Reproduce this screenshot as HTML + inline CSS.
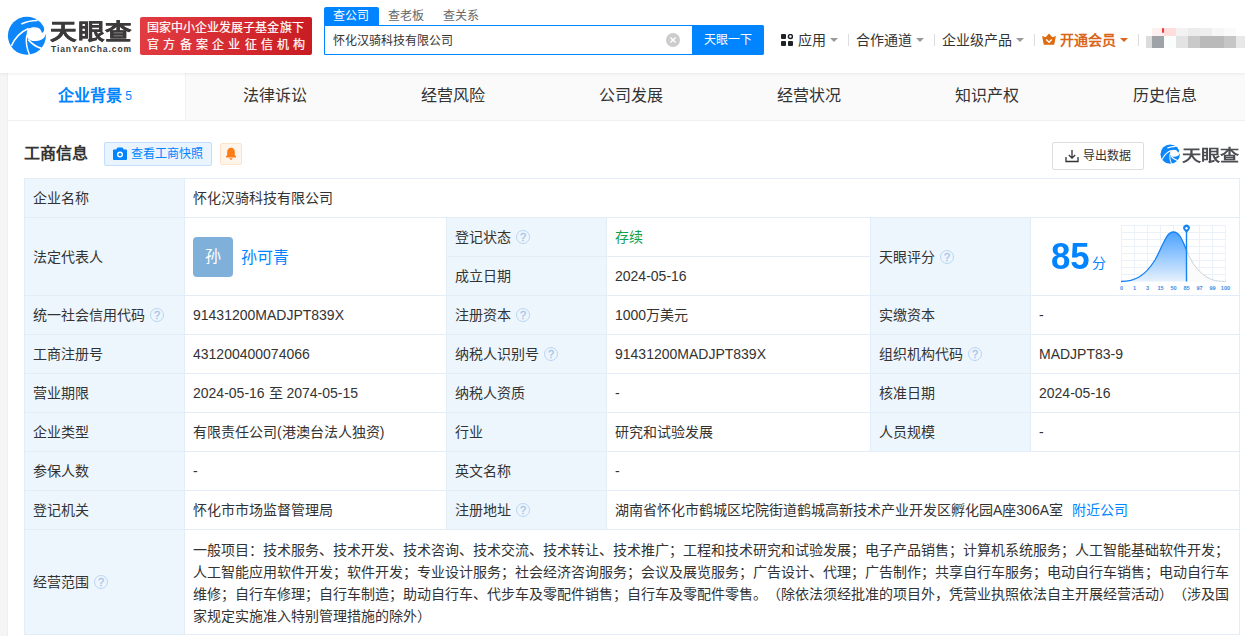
<!DOCTYPE html>
<html lang="zh-CN">
<head>
<meta charset="utf-8">
<style>
*{margin:0;padding:0;box-sizing:border-box}
html,body{width:1245px;height:636px;overflow:hidden;background:#f5f5f5}
body{font-family:"Liberation Sans",sans-serif;color:#333;font-size:14px;position:relative;text-spacing-trim:space-all}
.a{position:absolute;white-space:nowrap}
#hdr{position:absolute;left:0;top:0;width:1245px;height:73px;background:#fff;box-shadow:0 1px 3px rgba(0,0,0,.07);z-index:5}
#card{position:absolute;left:8px;top:73px;width:1245px;height:570px;background:#fff}
.tab{position:absolute;top:0;height:47px;width:178px;background:#fafafa;text-align:center;font-size:16px;line-height:46px;color:#333}
.hl{position:absolute;height:1px;background:#e2edf7}
.vl{position:absolute;width:1px;background:#e2edf7}
.lab{position:absolute;background:#eef6fd}
.t{position:absolute;white-space:nowrap;font-size:14px;line-height:20px;color:#333;margin-top:1px}
.q{display:inline-block;width:14px;height:14px;border:1px solid #b9d5f1;border-radius:50%;color:#a3c5ea;font-size:11px;line-height:12px;text-align:center;vertical-align:top;margin-left:5px;font-family:"Liberation Sans",sans-serif;-webkit-text-stroke:0.3px #a3c5ea}
</style>
</head>
<body>
<div id="hdr">
  <!-- logo -->
  <svg class="a" style="left:5px;top:14px" width="45" height="45" viewBox="0 0 45 45">
    <circle cx="21.9" cy="21.8" r="19" fill="#0c86fb"/>
    <path d="M23 14.8C26 13 31 12.6 34 14.2C35.5 15.2 36.4 16.8 36.7 18.6C37.6 18.9 38.6 18.2 38.9 16.8L39.3 14L42 14L42 20.2L40.7 20.2C40 23.5 37.5 26.5 31 27.1C27 27.3 24 26 22.5 24C21.3 22 21.3 18 23 14.8Z" fill="#fff"/>
    <path d="M16.4 10C21 7.8 27 6.4 32.6 6.5" stroke="#fff" stroke-width="1.7" fill="none"/>
    <path d="M6.3 32C10 24 15.5 18 23.5 14.6" stroke="#fff" stroke-width="1.6" fill="none"/>
    <path d="M24.6 41C21.5 34 20.5 28 21.8 21.2" stroke="#fff" stroke-width="1.5" fill="none"/>
    <path d="M23.3 25.5C26 29 29.5 32.3 36.5 34.4" stroke="#fff" stroke-width="1.8" fill="none"/>
  </svg>
  <div class="a" style="left:50px;top:19px;font-size:26px;line-height:30px;font-weight:bold;color:#3c3a3b;letter-spacing:1px;-webkit-text-stroke:0.5px #3c3a3b;transform:scale(1.02,0.84);transform-origin:0 0">天眼查</div>
  <div class="a" style="left:51px;top:44px;font-size:8.5px;line-height:10px;font-weight:bold;color:#3c3a3b;letter-spacing:0.9px">TianYanCha.com</div>
  <!-- red badge -->
  <div class="a" style="left:140px;top:17px;width:172px;height:38px;border-radius:2px;background:linear-gradient(100deg,#e23c42,#c81c22)"></div>
  <div class="a" style="left:147px;top:20px;font-size:12px;line-height:16px;color:#fff;letter-spacing:0.05px;-webkit-text-stroke:0.2px #fff">国家中小企业发展子基金旗下</div>
  <div class="a" style="left:147px;top:37px;font-size:12px;line-height:16px;color:#fff;letter-spacing:4.25px;-webkit-text-stroke:0.2px #fff">官方备案企业征信机构</div>
  <!-- search -->
  <div class="a" style="left:324px;top:7px;width:55px;height:19px;background:#0084ff;border-radius:2px 2px 0 0"></div>
  <div class="a" style="left:333px;top:8px;font-size:12px;line-height:16px;color:#fff">查公司</div>
  <div class="a" style="left:388px;top:8px;font-size:12px;line-height:16px;color:#666">查老板</div>
  <div class="a" style="left:443px;top:8px;font-size:12px;line-height:16px;color:#666">查关系</div>
  <div class="a" style="left:324px;top:25px;width:440px;height:30px;border:1px solid #0084ff;border-radius:0 2px 2px 0;background:#fff"></div>
  <div class="a" style="left:333px;top:33px;font-size:12px;line-height:16px;color:#333">怀化汉骑科技有限公司</div>
  <div class="a" style="left:666px;top:33px;width:14px;height:14px;border-radius:50%;background:#ccc"></div>
  <svg class="a" style="left:666px;top:33px" width="14" height="14" viewBox="0 0 14 14"><path d="M4.4 4.4L9.6 9.6M9.6 4.4L4.4 9.6" stroke="#fff" stroke-width="1.4"/></svg>
  <div class="a" style="left:692px;top:25px;width:72px;height:30px;background:#0084ff;border-radius:0 2px 2px 0"></div>
  <div class="a" style="left:704px;top:32px;font-size:12px;line-height:16px;color:#fff">天眼一下</div>
  <!-- nav -->
  <svg class="a" style="left:781px;top:34px" width="12" height="12" viewBox="0 0 12 12">
    <rect x="0" y="0" width="5" height="5" rx="1" fill="#1f2329"/>
    <circle cx="9.4" cy="2.6" r="2" stroke="#1f2329" stroke-width="1.5" fill="none"/>
    <rect x="0" y="7" width="5" height="5" rx="1" fill="#1f2329"/>
    <rect x="7" y="7" width="5" height="5" rx="1" fill="#1f2329"/>
  </svg>
  <div class="a" style="left:798px;top:30px;font-size:14px;line-height:20px;color:#333">应用</div>
  <div class="a" style="left:830px;top:38px;width:0;height:0;border-left:4px solid transparent;border-right:4px solid transparent;border-top:4px solid #999"></div>
  <div class="a" style="left:848px;top:34px;width:1px;height:12px;background:#ddd"></div>
  <div class="a" style="left:856px;top:30px;font-size:14px;line-height:20px;color:#333">合作通道</div>
  <div class="a" style="left:916px;top:38px;width:0;height:0;border-left:4px solid transparent;border-right:4px solid transparent;border-top:4px solid #999"></div>
  <div class="a" style="left:934px;top:34px;width:1px;height:12px;background:#ddd"></div>
  <div class="a" style="left:942px;top:30px;font-size:14px;line-height:20px;color:#333">企业级产品</div>
  <div class="a" style="left:1016px;top:38px;width:0;height:0;border-left:4px solid transparent;border-right:4px solid transparent;border-top:4px solid #999"></div>
  <div class="a" style="left:1034px;top:34px;width:1px;height:12px;background:#ddd"></div>
  <svg class="a" style="left:1041px;top:33px" width="16" height="13" viewBox="0 0 16 13">
    <path d="M1.1 3L4.7 4.3L8 0.5L11.3 4.3L14.9 3L13.2 11.8H2.8Z" fill="#dc6a0e"/>
    <path d="M5.2 6.4L8 9.3L10.8 6.4" stroke="#fff" stroke-width="1.4" fill="none"/>
  </svg>
  <div class="a" style="left:1060px;top:30px;font-size:14px;line-height:20px;color:#d9661a;font-weight:bold">开通会员</div>
  <div class="a" style="left:1120px;top:38px;width:0;height:0;border-left:4px solid transparent;border-right:4px solid transparent;border-top:4px solid #d9661a"></div>
  <div class="a" style="left:1138px;top:34px;width:1px;height:12px;background:#ddd"></div>
  <!-- mosaic -->
  <div class="a" style="left:1146px;top:27px;width:99px;height:22px;filter:blur(0.7px)">
  <div class="a" style="left:6px;top:1px;width:12px;height:8px;background:#fcf0f0"></div>
  <div class="a" style="left:18px;top:1px;width:12px;height:8px;background:#ffdddd"></div>
  <div class="a" style="left:30px;top:1px;width:12px;height:8px;background:#f2f2f2"></div>
  <div class="a" style="left:42px;top:1px;width:12px;height:8px;background:#ececec"></div>
  <div class="a" style="left:54px;top:1px;width:12px;height:8px;background:#eeeeee"></div>
  <div class="a" style="left:66px;top:1px;width:12px;height:8px;background:#f6f6f6"></div>
  <div class="a" style="left:78px;top:1px;width:12px;height:8px;background:#fafafa"></div>
  <div class="a" style="left:0px;top:9px;width:6px;height:12px;background:#dcdcdc"></div>
  <div class="a" style="left:6px;top:9px;width:12px;height:12px;background:#9ea3a8"></div>
  <div class="a" style="left:18px;top:9px;width:12px;height:12px;background:#fbfcfc"></div>
  <div class="a" style="left:30px;top:9px;width:12px;height:12px;background:#e3e3e3"></div>
  <div class="a" style="left:42px;top:9px;width:12px;height:12px;background:#c9c9c9"></div>
  <div class="a" style="left:54px;top:9px;width:12px;height:12px;background:#bababa"></div>
  <div class="a" style="left:66px;top:9px;width:12px;height:12px;background:#bababa"></div>
  <div class="a" style="left:78px;top:9px;width:12px;height:12px;background:#c6c6c6"></div>
  <div class="a" style="left:90px;top:9px;width:9px;height:12px;background:#e8e8e8"></div>
  <div class="a" style="left:16px;top:1px;width:2px;height:5px;background:#f33;border-radius:2px"></div>
  </div>
</div>

<div id="card">
  <div class="a" style="left:-1px;top:0;width:1px;height:570px;background:#eeeeee"></div>
  <div class="a" style="left:0;top:47px;width:1245px;height:1px;background:#f0f0f0"></div>
  <div class="tab" style="left:0;width:177px;background:#fff;color:#0084ff;font-weight:bold;padding-right:3px">企业背景<span style="font-size:12px;font-weight:normal;margin-left:3px;position:relative;top:-1px">5</span></div>
  <div class="a" style="left:177px;top:0;width:1px;height:47px;background:#f0f0f0"></div>
  <div class="tab" style="left:178px">法律诉讼</div>
  <div class="tab" style="left:356px">经营风险</div>
  <div class="tab" style="left:534px">公司发展</div>
  <div class="tab" style="left:712px">经营状况</div>
  <div class="tab" style="left:890px">知识产权</div>
  <div class="tab" style="left:1068px">历史信息</div>
</div>
<div id="body">
<div class="lab" style="left:24px;top:178px;width:160px;height:39px"></div>
<div class="lab" style="left:24px;top:217px;width:160px;height:78px"></div>
<div class="lab" style="left:24px;top:295px;width:160px;height:39px"></div>
<div class="lab" style="left:24px;top:334px;width:160px;height:39px"></div>
<div class="lab" style="left:24px;top:373px;width:160px;height:39px"></div>
<div class="lab" style="left:24px;top:412px;width:160px;height:39px"></div>
<div class="lab" style="left:24px;top:451px;width:160px;height:39px"></div>
<div class="lab" style="left:24px;top:490px;width:160px;height:39px"></div>
<div class="lab" style="left:24px;top:529px;width:160px;height:105px"></div>
<div class="lab" style="left:446px;top:217px;width:160px;height:39px"></div>
<div class="lab" style="left:446px;top:256px;width:160px;height:39px"></div>
<div class="lab" style="left:446px;top:295px;width:160px;height:39px"></div>
<div class="lab" style="left:446px;top:334px;width:160px;height:39px"></div>
<div class="lab" style="left:446px;top:373px;width:160px;height:39px"></div>
<div class="lab" style="left:446px;top:412px;width:160px;height:39px"></div>
<div class="lab" style="left:446px;top:451px;width:160px;height:39px"></div>
<div class="lab" style="left:446px;top:490px;width:160px;height:39px"></div>
<div class="lab" style="left:870px;top:217px;width:160px;height:78px"></div>
<div class="lab" style="left:870px;top:295px;width:160px;height:39px"></div>
<div class="lab" style="left:870px;top:334px;width:160px;height:39px"></div>
<div class="lab" style="left:870px;top:373px;width:160px;height:39px"></div>
<div class="lab" style="left:870px;top:412px;width:160px;height:39px"></div>
<div class="hl" style="left:24px;top:178px;width:1216px"></div>
<div class="hl" style="left:24px;top:217px;width:1216px"></div>
<div class="hl" style="left:24px;top:295px;width:1216px"></div>
<div class="hl" style="left:24px;top:334px;width:1216px"></div>
<div class="hl" style="left:24px;top:373px;width:1216px"></div>
<div class="hl" style="left:24px;top:412px;width:1216px"></div>
<div class="hl" style="left:24px;top:451px;width:1216px"></div>
<div class="hl" style="left:24px;top:490px;width:1216px"></div>
<div class="hl" style="left:24px;top:529px;width:1216px"></div>
<div class="hl" style="left:24px;top:634px;width:1216px"></div>
<div class="hl" style="left:446px;top:256px;width:425px"></div>
<div class="vl" style="left:24px;top:178px;height:457px"></div>
<div class="vl" style="left:184px;top:178px;height:457px"></div>
<div class="vl" style="left:1239px;top:178px;height:457px"></div>
<div class="vl" style="left:446px;top:217px;height:313px"></div>
<div class="vl" style="left:606px;top:217px;height:313px"></div>
<div class="vl" style="left:870px;top:217px;height:235px"></div>
<div class="vl" style="left:1030px;top:217px;height:235px"></div>
<div class="t" style="left:33px;top:178px;height:39px;line-height:39px;">企业名称</div>
<div class="t" style="left:193px;top:178px;height:39px;line-height:39px;">怀化汉骑科技有限公司</div>
<div class="t" style="left:33px;top:217px;height:78px;line-height:78px;">法定代表人</div>
<div class="t" style="left:455px;top:217px;height:39px;line-height:39px;">登记状态<span class="q" style="margin-top:12px">?</span></div>
<div class="t" style="left:615px;top:217px;height:39px;line-height:39px;color:#12a04a">存续</div>
<div class="t" style="left:455px;top:256px;height:39px;line-height:39px;">成立日期</div>
<div class="t" style="left:615px;top:256px;height:39px;line-height:39px;">2024-05-16</div>
<div class="t" style="left:879px;top:217px;height:78px;line-height:78px;">天眼评分<span class="q" style="margin-top:32px">?</span></div>
<div class="t" style="left:33px;top:295px;height:39px;line-height:39px;">统一社会信用代码<span class="q" style="margin-top:12px">?</span></div>
<div class="t" style="left:193px;top:295px;height:39px;line-height:39px;">91431200MADJPT839X</div>
<div class="t" style="left:455px;top:295px;height:39px;line-height:39px;">注册资本<span class="q" style="margin-top:12px">?</span></div>
<div class="t" style="left:615px;top:295px;height:39px;line-height:39px;">1000万美元</div>
<div class="t" style="left:879px;top:295px;height:39px;line-height:39px;">实缴资本</div>
<div class="t" style="left:1039px;top:295px;height:39px;line-height:39px;">-</div>
<div class="t" style="left:33px;top:334px;height:39px;line-height:39px;">工商注册号</div>
<div class="t" style="left:193px;top:334px;height:39px;line-height:39px;">431200400074066</div>
<div class="t" style="left:455px;top:334px;height:39px;line-height:39px;">纳税人识别号<span class="q" style="margin-top:12px">?</span></div>
<div class="t" style="left:615px;top:334px;height:39px;line-height:39px;">91431200MADJPT839X</div>
<div class="t" style="left:879px;top:334px;height:39px;line-height:39px;">组织机构代码<span class="q" style="margin-top:12px">?</span></div>
<div class="t" style="left:1039px;top:334px;height:39px;line-height:39px;">MADJPT83-9</div>
<div class="t" style="left:33px;top:373px;height:39px;line-height:39px;">营业期限</div>
<div class="t" style="left:193px;top:373px;height:39px;line-height:39px;">2024-05-16 至 2074-05-15</div>
<div class="t" style="left:455px;top:373px;height:39px;line-height:39px;">纳税人资质</div>
<div class="t" style="left:615px;top:373px;height:39px;line-height:39px;">-</div>
<div class="t" style="left:879px;top:373px;height:39px;line-height:39px;">核准日期</div>
<div class="t" style="left:1039px;top:373px;height:39px;line-height:39px;">2024-05-16</div>
<div class="t" style="left:33px;top:412px;height:39px;line-height:39px;">企业类型</div>
<div class="t" style="left:193px;top:412px;height:39px;line-height:39px;">有限责任公司(港澳台法人独资)</div>
<div class="t" style="left:455px;top:412px;height:39px;line-height:39px;">行业</div>
<div class="t" style="left:615px;top:412px;height:39px;line-height:39px;">研究和试验发展</div>
<div class="t" style="left:879px;top:412px;height:39px;line-height:39px;">人员规模</div>
<div class="t" style="left:1039px;top:412px;height:39px;line-height:39px;">-</div>
<div class="t" style="left:33px;top:451px;height:39px;line-height:39px;">参保人数</div>
<div class="t" style="left:193px;top:451px;height:39px;line-height:39px;">-</div>
<div class="t" style="left:455px;top:451px;height:39px;line-height:39px;">英文名称</div>
<div class="t" style="left:615px;top:451px;height:39px;line-height:39px;">-</div>
<div class="t" style="left:33px;top:490px;height:39px;line-height:39px;">登记机关</div>
<div class="t" style="left:193px;top:490px;height:39px;line-height:39px;">怀化市市场监督管理局</div>
<div class="t" style="left:455px;top:490px;height:39px;line-height:39px;">注册地址<span class="q" style="margin-top:12px">?</span></div>
<div class="t" style="left:615px;top:490px;height:39px;line-height:39px;">湖南省怀化市鹤城区坨院街道鹤城高新技术产业开发区孵化园A座306A室<span style="color:#0084ff;margin-left:9px">附近公司</span></div>
<div class="t" style="left:33px;top:529px;height:105px;line-height:105px;">经营范围<span class="q" style="margin-top:45px">?</span></div>
<div class="t" style="left:193px;top:538px;line-height:22px">一般项目：技术服务、技术开发、技术咨询、技术交流、技术转让、技术推广；工程和技术研究和试验发展；电子产品销售；计算机系统服务；人工智能基础软件开发；<br>人工智能应用软件开发；软件开发；专业设计服务；社会经济咨询服务；会议及展览服务；广告设计、代理；广告制作；共享自行车服务；电动自行车销售；电动自行车<br>维修；自行车修理；自行车制造；助动自行车、代步车及零配件销售；自行车及零配件零售。（除依法须经批准的项目外，凭营业执照依法自主开展经营活动）（涉及国<br>家规定实施准入特别管理措施的除外）</div>
</div>
<!-- section header -->
<div class="a" style="left:24px;top:143px;font-size:16px;line-height:22px;font-weight:bold;color:#333">工商信息</div>
<div class="a" style="left:104px;top:142px;width:108px;height:24px;background:#eaf4fe;border:1px solid #c3dffb;border-radius:2px"></div>
<svg class="a" style="left:113px;top:147px" width="14" height="13" viewBox="0 0 14 13">
  <path d="M4.5 0.5H9.5L10.8 2.5H13A1 1 0 0 1 14 3.5V12A1 1 0 0 1 13 13H1A1 1 0 0 1 0 12V3.5A1 1 0 0 1 1 2.5H3.2Z" fill="#0084ff"/>
  <circle cx="7" cy="7.5" r="3" fill="#fff"/><circle cx="7" cy="7.5" r="1.6" fill="#0084ff"/>
</svg>
<div class="a" style="left:131px;top:146px;font-size:12px;line-height:16px;color:#0084ff">查看工商快照</div>
<div class="a" style="left:220px;top:143px;width:22px;height:22px;background:#fff4ea;border:1px solid #ffe2c8;border-radius:2px"></div>
<svg class="a" style="left:225px;top:147px" width="12" height="13" viewBox="0 0 12 13">
  <path d="M6 0.8C3.6 0.8 2.2 2.6 2.2 5V8L1 9.6V10.4H11V9.6L9.8 8V5C9.8 2.6 8.4 0.8 6 0.8Z" fill="#ff7b15"/>
  <path d="M4.5 11.2A1.5 1.5 0 0 0 7.5 11.2Z" fill="#ff7b15"/>
</svg>
<!-- export -->
<div class="a" style="left:1052px;top:142px;width:92px;height:28px;background:#fff;border:1px solid #ddd;border-radius:2px"></div>
<svg class="a" style="left:1065px;top:149px" width="14" height="14" viewBox="0 0 14 14">
  <path d="M7 1V9M3.8 6L7 9.2L10.2 6" stroke="#333" stroke-width="1.3" fill="none"/>
  <path d="M1 8V12.5H13V8" stroke="#333" stroke-width="1.3" fill="none"/>
</svg>
<div class="a" style="left:1083px;top:148px;font-size:12px;line-height:16px;color:#333">导出数据</div>
<!-- small logo -->
<svg class="a" style="left:1159px;top:143px" width="23" height="23" viewBox="0 0 45 45">
    <circle cx="21.9" cy="21.8" r="19" fill="#0c86fb"/>
    <path d="M23 14.8C26 13 31 12.6 34 14.2C35.5 15.2 36.4 16.8 36.7 18.6C37.6 18.9 38.6 18.2 38.9 16.8L39.3 14L42 14L42 20.2L40.7 20.2C40 23.5 37.5 26.5 31 27.1C27 27.3 24 26 22.5 24C21.3 22 21.3 18 23 14.8Z" fill="#fff"/>
    <path d="M16.4 10C21 7.8 27 6.4 32.6 6.5" stroke="#fff" stroke-width="2.21" fill="none"/>
    <path d="M6.3 32C10 24 15.5 18 23.5 14.6" stroke="#fff" stroke-width="2.08" fill="none"/>
    <path d="M24.6 41C21.5 34 20.5 28 21.8 21.2" stroke="#fff" stroke-width="1.95" fill="none"/>
    <path d="M23.3 25.5C26 29 29.5 32.3 36.5 34.4" stroke="#fff" stroke-width="2.34" fill="none"/>
  </svg>
<div class="a" style="left:1182px;top:146px;font-size:19px;line-height:24px;font-weight:bold;color:#4b4d52;transform:scale(1.01,0.84);transform-origin:0 0">天眼查</div>
<!-- legal rep -->
<div class="a" style="left:193px;top:237px;width:40px;height:40px;border-radius:4px;background:#7fb0d9;color:#fff;font-size:16px;line-height:40px;text-align:center">孙</div>
<div class="a" style="left:241px;top:247px;font-size:16px;line-height:22px;color:#0084ff">孙可青</div>
<!-- score -->
<div class="a" style="left:1051px;top:234px;font-size:37px;line-height:46px;font-weight:bold;color:#0084ff;transform:scaleX(0.94);transform-origin:0 0">85</div>
<div class="a" style="left:1092px;top:254px;font-size:14px;line-height:18px;color:#0084ff">分</div>
<svg class="a" style="left:1115px;top:220px" width="125" height="75" viewBox="0 0 125 75">
  <defs><linearGradient id="g1" x1="0" y1="0" x2="0" y2="1"><stop offset="0" stop-color="#4aa2ff"/><stop offset="1" stop-color="#e6f1fd"/></linearGradient></defs>
  <g stroke="#eaf1f8" stroke-width="1" fill="none">
    <path d="M6.5 5.5H110.5M6.5 12.5H110.5M6.5 19.5H110.5M6.5 26.5H110.5M6.5 33.5H110.5M6.5 40.5H110.5M6.5 47.5H110.5M6.5 54.5H110.5"/>
    <path d="M6.5 5.5V61.5M19.5 5.5V61.5M32.5 5.5V61.5M45.5 5.5V61.5M58.5 5.5V61.5M71.5 5.5V61.5M84.5 5.5V61.5M97.5 5.5V61.5M110.5 5.5V61.5"/>
  </g>
  <path d="M6 61.5C20 61.5 30 56 40 40C48 26 51 12 58.3 12C65 12 68 22 71.5 30L71.5 61.5Z" fill="url(#g1)"/>
  <path d="M71.5 30C76 42 84 55 98 60C104 61.5 110 61.5 111 61.5L71.5 61.5Z" fill="#fbfbfb"/>
  <path d="M71.5 30C76 42 84 55 98 60C104 61.5 110 61.5 111 61.5" stroke="#c9d3dc" stroke-width="1" fill="none"/>
  <path d="M6 61.5C20 61.5 30 56 40 40C48 26 51 12 58.3 12C65 12 68 22 71.5 30" stroke="#1683f5" stroke-width="1.3" fill="none"/>
  <path d="M71.5 9V61.5" stroke="#1683f5" stroke-width="1.4"/>
  <path d="M71.5 13L68.9 9.9A3.3 3.3 0 1 1 74.1 9.9Z" fill="#1683f5"/>
  <circle cx="71.5" cy="8.2" r="1.2" fill="#fff"/>
  <g font-family="Liberation Sans" font-size="5.6" font-weight="bold" fill="#3b8fe8" text-anchor="middle">
    <text x="6.5" y="69.6">0</text><text x="19.5" y="69.6">1</text><text x="32.5" y="69.6">3</text><text x="45.5" y="69.6">15</text><text x="58.5" y="69.6">50</text><text x="71.5" y="69.6">85</text><text x="84.5" y="69.6">97</text><text x="97.5" y="69.6">99</text><text x="110.5" y="69.6">100</text>
  </g>
</svg>
</body>
</html>
